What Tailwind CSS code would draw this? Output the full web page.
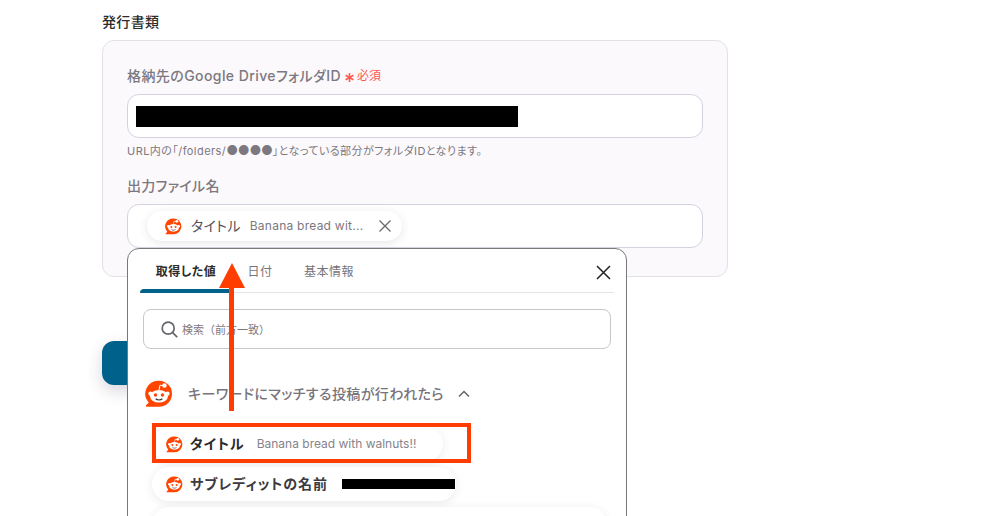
<!DOCTYPE html>
<html lang="ja">
<head>
  <meta charset="UTF-8" />
  <title>発行書類</title>
  <script src="https://cdn.jsdelivr.net/npm/@tailwindcss/browser@4"></script>
</head>
<body class="bg-white font-['Inter','Noto_Sans_CJK_JP',sans-serif] text-[#2b2b2b] [font-feature-settings:'palt'] tracking-[0.02em]">
  <svg class="hidden">
    <symbol id="reddit" viewBox="0 0 20 20">
      <path d="M10 .5a9.3 9.3 0 0 1 0 18.6H1.2c-.6 0-.8-.6-.4-1l1.9-2A9.3 9.3 0 0 1 10 .5z" fill="#ff4500"/>
      <ellipse cx="10" cy="11.6" rx="6.4" ry="4.5" fill="#fff"/>
      <circle cx="3.9" cy="9.8" r="1.5" fill="#fff"/>
      <circle cx="16.1" cy="9.8" r="1.5" fill="#fff"/>
      <circle cx="13.9" cy="3.9" r="1.6" fill="#fff"/>
      <path d="M10 7.2 10.7 3.7l2.4.5" fill="none" stroke="#fff" stroke-width=".7"/>
      <circle cx="7.5" cy="10.7" r="1.2" fill="#ff4500"/>
      <circle cx="12.5" cy="10.7" r="1.2" fill="#ff4500"/>
      <path d="M7.6 13.4c1.3 1.2 3.5 1.2 4.8 0" fill="none" stroke="#333" stroke-width=".8"/>
    </symbol>
  </svg>

  <div class="relative h-[516px] w-[986px] overflow-hidden">
    <div class="ml-[102px] w-[626px]">
      <h2 class="h-[40px] pt-[12px] text-[14px] leading-[20px] font-medium">発行書類</h2>

      <!-- card -->
      <div class="h-[237px] rounded-[12px] border border-[#e2e1e8] bg-[#fbf9fc] px-[24px] pt-[24px]">
        <div class="flex h-[20px] items-center text-[14px] font-medium tracking-[0.03em] text-[#7c787f]">
          格納先のGoogle DriveフォルダID
          <svg class="mt-[4px] ml-[4px] h-[9px] w-[9px]" viewBox="0 0 9 9" fill="none" stroke="#ff5a52" stroke-width="1.6"><path d="M4.5 0v9M.6 2.2l7.8 4.6M8.4 2.2L.6 6.8"/></svg>
          <span class="mt-[2px] ml-[3px] text-[12px] font-normal tracking-normal text-[#ff5a52]">必須</span>
        </div>
        <div class="mt-[9px] flex h-[44px] items-center rounded-[12px] border border-[#d3d3e0] bg-white pl-[8px]">
          <div class="h-[21px] w-[382px] bg-black"></div>
        </div>
        <p class="mt-[4px] h-[16px] text-[11px] leading-[16px] tracking-[0.04em] text-[#7c787f]">URL内の「/folders/<span class="text-[13px] tracking-[-0.02em]">●●●●</span>」となっている部分がフォルダIDとなります。</p>
        <div class="mt-[18px] h-[20px] text-[14px] leading-[20px] font-medium text-[#7c787f]">出力ファイル名</div>
        <div class="mt-[8px] flex h-[44px] items-center rounded-[12px] border border-[#d3d3e0] bg-white pl-[19px]">
          <div class="flex h-[30px] w-[255px] items-center rounded-full bg-white pl-[18px] shadow-[0_2px_8px_rgba(60,50,90,0.12)]">
            <svg class="h-[17px] w-[17px] shrink-0"><use href="#reddit"/></svg>
            <span class="ml-[9px] pb-[2px] text-[14px] text-[#55525a]">タイトル</span>
            <span class="ml-[9px] text-[12px] tracking-[0.25px] text-[#7c787f]">Banana bread wit...</span>
            <svg class="ml-[15px] h-[14px] w-[14px]" viewBox="0 0 14 14" fill="none" stroke="#6a686e" stroke-width="1.3"><path d="M1.5 1.5l11 11M12.5 1.5l-11 11"/></svg>
          </div>
        </div>
      </div>

      <div class="mt-[64px] h-[44px] w-[120px] rounded-[12px] bg-[#00618a] shadow-[0_6px_16px_rgba(60,50,90,0.2)]"></div>
    </div>

    <!-- value picker popup -->
    <div class="absolute top-[248px] left-[127px] h-[300px] w-[500px] rounded-t-[12px] border border-[#77777c] bg-white">
      <div class="mx-[12px] flex h-[44px] border-b border-[#e4e4e8] text-[12px] tracking-[0.04em]">
        <div class="relative w-[92px] pt-[14px] text-center font-semibold text-[#2b2b2b]">
          取得した値
          <div class="absolute right-0 -bottom-px left-0 h-[4px] rounded-t-[5px] bg-[#00618a]"></div>
        </div>
        <div class="w-[56px] pt-[14px] text-center text-[#77747b]">日付</div>
        <div class="ml-[4px] w-[74px] pt-[14px] text-center text-[#77747b]">基本情報</div>
        <svg class="mt-[16px] ml-auto mr-[3px] h-[15px] w-[15px]" viewBox="0 0 15 15" fill="none" stroke="#222" stroke-width="1.5"><path d="M1 1l13 13M14 1L1 14"/></svg>
      </div>

      <div class="mx-[15px] mt-[16px] flex h-[40px] items-center rounded-[8px] border border-[#c8c8cc] pl-[17px]">
        <svg class="h-[17px] w-[17px]" viewBox="0 0 17 17" fill="none" stroke="#66656a" stroke-width="1.7"><circle cx="7.2" cy="7.2" r="6"/><path d="M11.6 11.6l4.6 4.6"/></svg>
        <span class="ml-[4px] pt-[3px] text-[11px] tracking-normal text-[#7c787f] [font-feature-settings:normal]">検索（前方一致）</span>
      </div>

      <div class="mt-[30px] flex h-[30px] items-center pl-[17px]">
        <svg class="h-[28px] w-[28px]"><use href="#reddit"/></svg>
        <span class="ml-[15px] pb-[2px] text-[14px] font-medium tracking-[0.03em] text-[#77747b]">キーワードにマッチする投稿が行われたら</span>
        <svg class="ml-[14px] h-[8px] w-[12px]" viewBox="0 0 12 8" fill="none" stroke="#66656a" stroke-width="1.5"><path d="M1 6.5l5-5 5 5"/></svg>
      </div>

      <div class="mt-[18px] ml-[24px] flex h-[34px] w-[291px] items-center rounded-full bg-white pl-[14px] shadow-[0_2px_10px_rgba(60,50,90,0.1)]">
        <svg class="h-[17px] w-[17px]"><use href="#reddit"/></svg>
        <span class="ml-[7px] pb-[2px] text-[14px] font-semibold tracking-[0.07em] text-[#2b2b2b]">タイトル</span>
        <span class="ml-[12px] text-[12px] tracking-normal text-[#86838a]">Banana bread with walnuts!!</span>
      </div>
      <div class="mt-[6px] ml-[24px] flex h-[34px] w-[304px] items-center rounded-full bg-white pl-[14px] shadow-[0_2px_10px_rgba(60,50,90,0.1)]">
        <svg class="h-[17px] w-[17px]"><use href="#reddit"/></svg>
        <span class="ml-[7px] pb-[2px] text-[14px] font-semibold tracking-[0.07em] text-[#3c3a40]">サブレディットの名前</span>
        <div class="ml-[14px] h-[10px] w-[113px] bg-black"></div>
      </div>
      <div class="mt-[6px] ml-[24px] flex h-[34px] w-[455px] items-center rounded-full bg-white pl-[14px] shadow-[0_2px_10px_rgba(60,50,90,0.1)]">
        <svg class="h-[17px] w-[17px]"><use href="#reddit"/></svg>
      </div>
    </div>

    <!-- annotations -->
    <div class="absolute top-[423px] left-[152px] h-[40px] w-[319px] border-[4px] border-[#ff3d00]"></div>
    <div class="absolute top-[288px] left-[229px] h-[123px] w-[5px] bg-[#ff3d00]"></div>
    <div class="absolute top-[263px] left-[219px] h-0 w-0 border-x-[13px] border-b-[25px] border-x-transparent border-b-[#ff3d00]"></div>
  </div>
</body>
</html>
